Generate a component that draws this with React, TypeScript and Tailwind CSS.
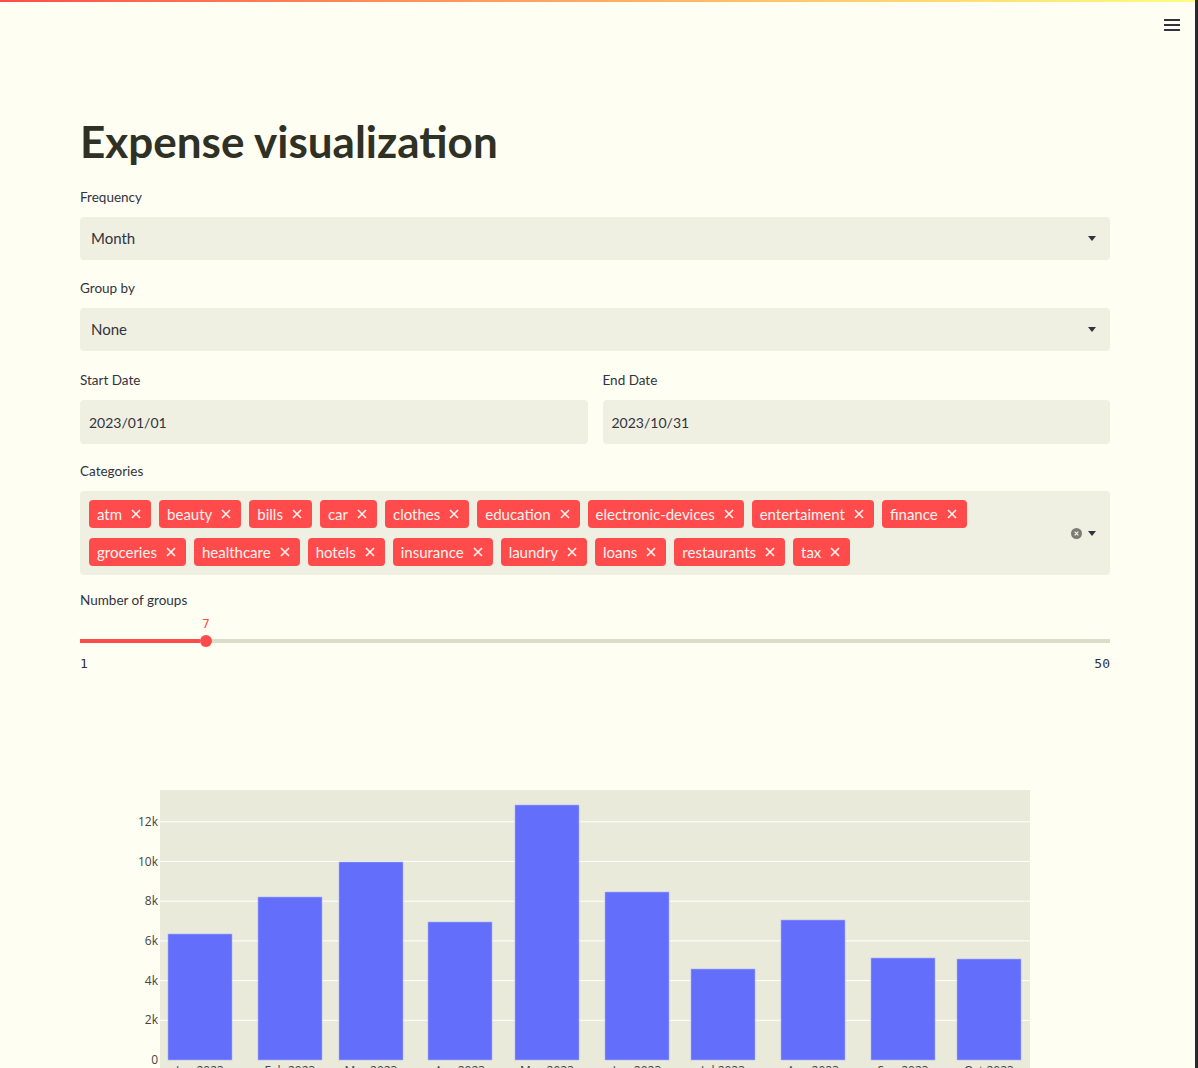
import { ReactNode } from 'react';

const row1 = ['atm', 'beauty', 'bills', 'car', 'clothes', 'education', 'electronic-devices', 'entertaiment', 'finance'];
const row2 = ['groceries', 'healthcare', 'hotels', 'insurance', 'laundry', 'loans', 'restaurants', 'tax'];

const bars = [
  { label: 'Jan 2023', x: 168, top: 934 },
  { label: 'Feb 2023', x: 258, top: 897 },
  { label: 'Mar 2023', x: 339, top: 862 },
  { label: 'Apr 2023', x: 428, top: 922 },
  { label: 'May 2023', x: 515, top: 805 },
  { label: 'Jun 2023', x: 605, top: 892 },
  { label: 'Jul 2023', x: 691, top: 969 },
  { label: 'Aug 2023', x: 781, top: 920 },
  { label: 'Sep 2023', x: 871, top: 958 },
  { label: 'Oct 2023', x: 957, top: 959 },
];

const ticks = [0, 2, 4, 6, 8, 10, 12];

function Caret() {
  return (
    <svg viewBox="0 0 8 5" className="w-[8px] h-[5px] text-[#31333f]" fill="currentColor">
      <path d="M0 0h8L4 5z" />
    </svg>
  );
}

function Label({ children }: { children: ReactNode }) {
  return <div className="h-[20px] text-[13.5px] leading-[20px] text-[#31333f]">{children}</div>;
}

function SelectBox({ value }: { value: string }) {
  return (
    <div className="mt-[10px] flex h-[43px] items-center justify-between rounded-[4px] bg-[#efefe2] pl-[11px] pr-[14px]">
      <span className="text-[15px] text-[#31333f]">{value}</span>
      <Caret />
    </div>
  );
}

function Tag({ name }: { name: string }) {
  return (
    <div className="mx-[4px] my-[5px] flex h-[28px] items-center gap-[9px] rounded-[4px] bg-[#ff4b4b] pl-[8px] pr-[10px] text-[15px] text-[#fff4f0]">
      <span>{name}</span>
      <svg viewBox="0 0 10 10" className="h-[10px] w-[10px]" stroke="currentColor" strokeWidth="1.6">
        <path d="M1 1l8 8M9 1l-8 8" />
      </svg>
    </div>
  );
}

function Chart() {
  const y0 = 1060;
  const k = 19.85;
  return (
    <svg viewBox="80 770 1030 300" width={1030} height={300} className="block">
      <rect x={160} y={790} width={870} height={290} fill="#eaeadb" />
      {ticks.map((t) => (
        <g key={t}>
          {t > 0 && <line x1={160} x2={1030} y1={y0 - t * k} y2={y0 - t * k} stroke="#ffffff" strokeWidth={1} />}
          <text
            x={158}
            y={y0 - t * k + 4}
            textAnchor="end"
            fontSize={12}
            fill="#444444"
            fontFamily="'Open Sans', sans-serif"
          >
            {t === 0 ? '0' : `${t}k`}
          </text>
        </g>
      ))}
      {bars.map((b) => (
        <g key={b.label}>
          <rect x={b.x} y={b.top} width={64} height={y0 - b.top} fill="#636efa" stroke="#a8aefc" strokeWidth={0.6} />
          <text
            x={b.x + 32}
            y={1075}
            textAnchor="middle"
            fontSize={12}
            fill="#444444"
            fontFamily="'Open Sans', sans-serif"
          >
            {b.label}
          </text>
        </g>
      ))}
    </svg>
  );
}

export default function App() {
  return (
    <div className="flex h-[1068px] w-full overflow-hidden bg-[#fefef3] font-['Lato','Noto_Sans',sans-serif] text-[#31333f]">
      <div className="relative flex-1">
        <div className="h-[2px] bg-gradient-to-r from-[#ff4b4b] to-[#fffd80]" />
        <div className="flex justify-end pr-[15px] pt-[17px]">
          <div className="flex w-[16px] flex-col gap-[3px]">
            <div className="h-[2px] bg-[#31333f]" />
            <div className="h-[2px] bg-[#31333f]" />
            <div className="h-[2px] bg-[#31333f]" />
          </div>
        </div>

        <main className="ml-[80px] w-[1030px]">
          <h1 className="mt-[84px] text-[44px] font-bold leading-[53px] text-[#2f3125]">Expense visualization</h1>

          <div className="mt-[19px]">
            <Label>Frequency</Label>
            <SelectBox value="Month" />
          </div>

          <div className="mt-[18px]">
            <Label>Group by</Label>
            <SelectBox value="None" />
          </div>

          <div className="mt-[19px] grid grid-cols-2 gap-[15px]">
            <div>
              <Label>Start Date</Label>
              <div className="mt-[10px] flex h-[44px] items-center rounded-[4px] bg-[#efefe2] px-[9px] text-[14px]">
                2023/01/01
              </div>
            </div>
            <div>
              <Label>End Date</Label>
              <div className="mt-[10px] flex h-[44px] items-center rounded-[4px] bg-[#efefe2] px-[9px] text-[14px]">
                2023/10/31
              </div>
            </div>
          </div>

          <div className="mt-[17px]">
            <Label>Categories</Label>
            <div className="mt-[10px] flex items-center justify-between rounded-[4px] bg-[#efefe2] py-[4px] pl-[5px] pr-[14px]">
              <div>
                <div className="flex">
                  {row1.map((c) => (
                    <Tag key={c} name={c} />
                  ))}
                </div>
                <div className="flex">
                  {row2.map((c) => (
                    <Tag key={c} name={c} />
                  ))}
                </div>
              </div>
              <div className="flex items-center gap-[6px]">
                <svg viewBox="0 0 12 12" className="h-[11px] w-[11px]">
                  <circle cx="6" cy="6" r="6" fill="#7c7c76" />
                  <path d="M4 4l4 4M8 4l-4 4" stroke="#efefe2" strokeWidth="1.4" />
                </svg>
                <Caret />
              </div>
            </div>
          </div>

          <div className="mt-[15px]">
            <Label>Number of groups</Label>
            <div className="mt-[6px] flex h-[16px]">
              <span className="ml-[121px] w-[10px] text-center font-['DejaVu_Sans_Mono',monospace] text-[13px] leading-[16px] text-[#ff4b4b]">
                7
              </span>
            </div>
            <div className="mt-[3px] flex h-[12px] items-center">
              <div className="h-[4px] w-[120px] bg-[#ff4b4b]" />
              <div className="h-[12px] w-[12px] rounded-full bg-[#ff4b4b]" />
              <div className="h-[4px] flex-1 bg-[#dcdccb]" />
            </div>
            <div className="mt-[9px] flex justify-between font-['DejaVu_Sans_Mono',monospace] text-[13px] leading-[16px]">
              <span>1</span>
              <span>50</span>
            </div>
          </div>

          <div className="mt-[98px]">
            <Chart />
          </div>
        </main>
      </div>
      <div className="w-[3px] bg-[#2a2a2a]" />
    </div>
  );
}
